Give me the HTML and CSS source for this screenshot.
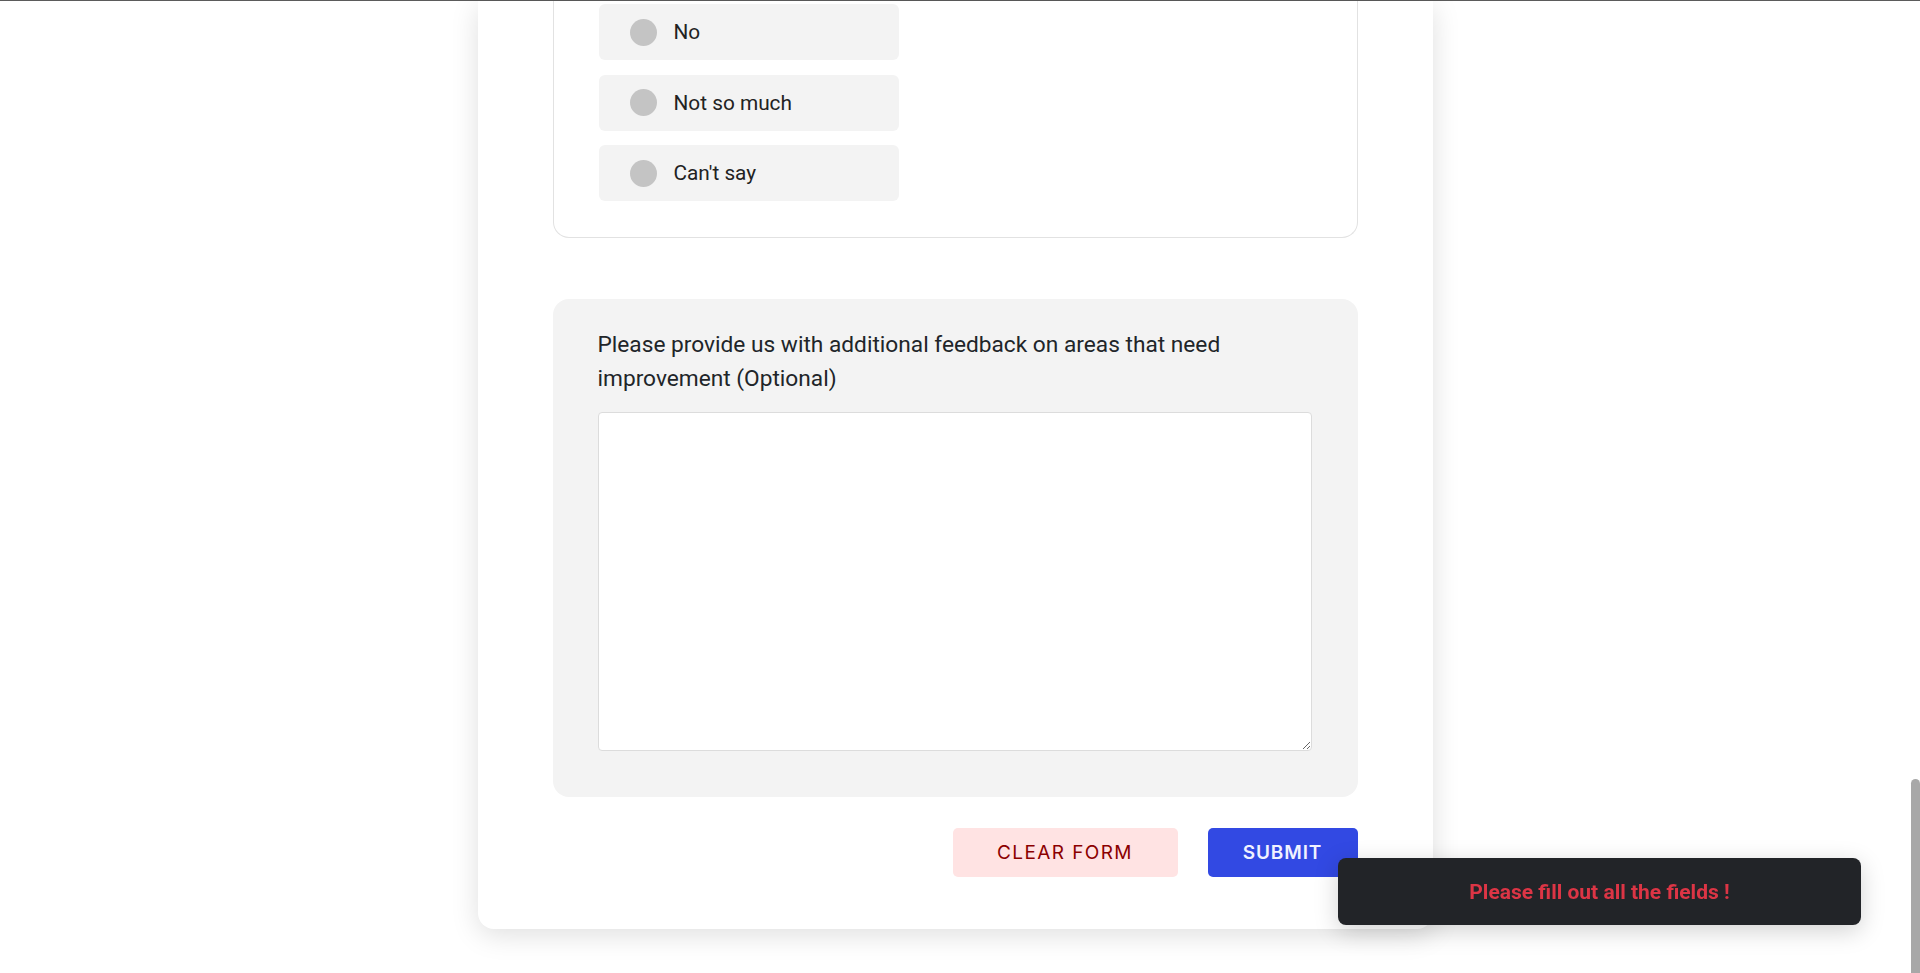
FILE: index.html
```html
<!DOCTYPE html>
<html lang="en">
<head>
<meta charset="utf-8">
<title>Feedback form</title>
<link rel="stylesheet" href="styles.css">
</head>
<body>
<div class="topline"></div>
<div class="viewport">
  <main class="main">
    <form class="card">
      <section class="question">
        <label class="option"><span class="radio"></span><span class="option-text">No</span></label>
        <label class="option"><span class="radio"></span><span class="option-text">Not so much</span></label>
        <label class="option"><span class="radio"></span><span class="option-text">Can't say</span></label>
      </section>
      <section class="feedback">
        <p class="feedback-label">Please provide us with additional feedback on areas that need improvement (Optional)</p>
        <textarea class="feedback-input"></textarea>
      </section>
      <div class="actions">
        <button type="button" class="btn btn-clear">CLEAR FORM</button>
        <button type="button" class="btn btn-submit">SUBMIT</button>
      </div>
    </form>
  </main>
  <div class="scrollbar"><div class="thumb"></div></div>
</div>
<div class="toast">Please fill out all the fields !</div>
</body>
</html>
```
FILE: styles.css
```css
* { box-sizing: border-box; }
html, body { margin: 0; padding: 0; }
body {
  background: #ffffff;
  font-family: Roboto, "Liberation Sans", sans-serif;
  color: #212529;
  height: 973px;
  overflow: hidden;
}
.topline { height: 1px; background: #5b5b5b; }
.viewport {
  display: flex;
  height: 972px;
}
.main {
  flex: 1;
  display: flex;
  justify-content: center;
  align-items: flex-start;
}
.scrollbar {
  width: 10px;
  display: flex;
  flex-direction: column;
  justify-content: flex-end;
  padding-left: 1px;
}
.thumb {
  height: 194px;
  background: #a8a8a8;
  border-radius: 5px 5px 0 0;
}
.card {
  width: 955px;
  background: #fff;
  border-radius: 0 0 16px 16px;
  box-shadow: 0 6px 28px rgba(0,0,0,0.13);
  padding: 0 75px 52px;
}
.question {
  border: 1px solid #e2e2e2;
  border-top: none;
  border-radius: 0 0 16px 16px;
  padding: 3px 45px 36px;
  display: flex;
  flex-direction: column;
  gap: 14.5px;
}
.option {
  width: 300px;
  height: 56px;
  background: #f3f3f3;
  border-radius: 6px;
  display: flex;
  align-items: center;
  padding-left: 31px;
  gap: 17px;
}
.radio {
  width: 27px;
  height: 27px;
  border-radius: 50%;
  background: #c4c4c4;
  flex: none;
}
.option-text {
  font-size: 20.8px;
  color: #222;
}
.feedback {
  margin-top: 61px;
  background: #f3f3f3;
  border-radius: 16px;
  padding: 29px 45px 46px;
}
.feedback-label {
  margin: 0 0 16px;
  font-size: 22.7px;
  line-height: 34px;
  color: #212529;
}
.feedback-input {
  display: block;
  width: 714px;
  height: 339px;
  background: #fff;
  border: 1px solid #dcdcdc;
  border-radius: 4px;
  margin: 0;
}
.actions {
  margin-top: 31px;
  display: flex;
  justify-content: flex-end;
  gap: 30px;
}
.btn {
  height: 49px;
  border: none;
  border-radius: 5px;
  font-family: Inter, "Open Sans", sans-serif;
  font-size: 19px;
  cursor: pointer;
}
.btn-clear {
  width: 225px;
  background: #ffe3e3;
  color: #8b0000;
  font-weight: 400;
  letter-spacing: 1.4px;
}
.btn-submit {
  width: 150px;
  background: #3249e3;
  color: #f0f2ff;
  font-weight: 600;
  letter-spacing: 0.9px;
}
.toast {
  position: fixed;
  right: 59px;
  bottom: 48px;
  width: 523px;
  height: 67px;
  background: #222428;
  border-radius: 8px;
  box-shadow: 0 6px 24px rgba(0,0,0,0.18);
  display: flex;
  align-items: center;
  justify-content: center;
  color: #dc3545;
  font-family: Roboto, "Liberation Sans", sans-serif;
  font-weight: 700;
  font-size: 21px;
}
```
